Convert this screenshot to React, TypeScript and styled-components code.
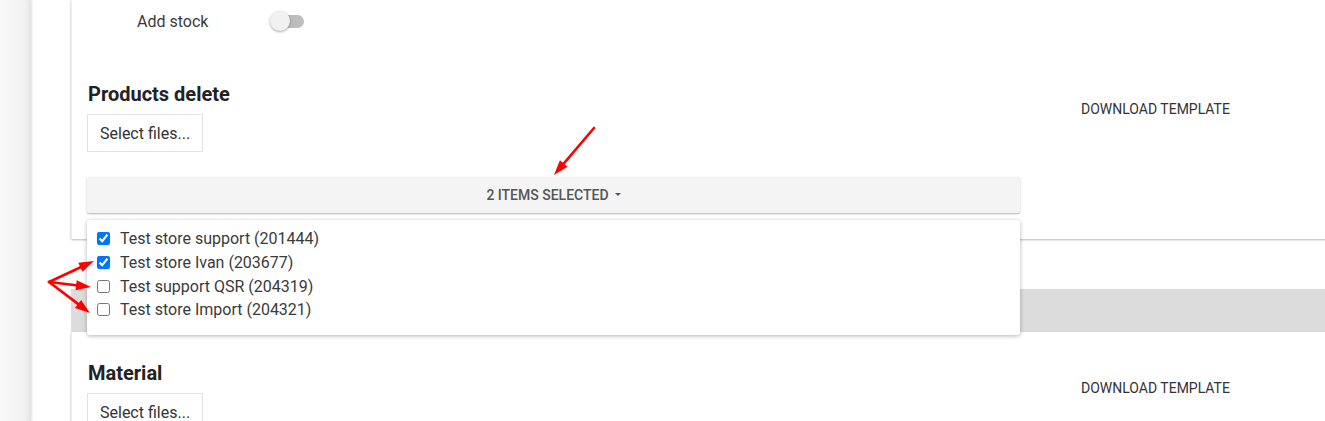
import React from "react";
import styled, { createGlobalStyle } from "styled-components";

const GlobalStyle = createGlobalStyle`
    html, body {
        margin: 0;
        padding: 0;
        background: #ffffff;
        overflow: hidden;
    }
    body {
        font-family: Roboto, "Liberation Sans", Arial, sans-serif;
        color: #333333;
    }
`;

const Page = styled.div`
    position: relative;
    display: flex;
    width: 1325px;
    height: 421px;
    overflow: hidden;
`;
const SideStrip = styled.div`
    flex: 0 0 31px;
    background: linear-gradient(to right, #f9f9f9 0%, #f1f1f1 80%, #e4e4e4 100%);
    box-shadow: 1px 0 2px rgba(0, 0, 0, 0.12);
    z-index: 1;
`;
const Main = styled.div`
    flex: 1;
    min-width: 0;
    padding-left: 40px;
    display: flex;
    flex-direction: column;
`;
const Card = styled.div<{ $top?: number }>`
    margin-right: -20px;
    background: #ffffff;
    border-left: 1px solid #ececec;
    box-shadow: 0 1px 2px rgba(0, 0, 0, 0.28);
    padding: ${(p) => p.$top ?? 0}px 0 26px 15px;
`;
const ToggleRow = styled.div`
    display: flex;
    align-items: center;
    height: 42px;
    padding-left: 50px;
`;
const ToggleLabel = styled.div`
    width: 133px;
    font-size: 16px;
    color: #3a3a3a;
`;
const Toggle = styled.div`
    position: relative;
    width: 34px;
    height: 20px;
    display: flex;
    align-items: center;
`;
const ToggleTrack = styled.div`
    margin-left: 8px;
    width: 26px;
    height: 13px;
    border-radius: 7px;
    background: #bdbdbd;
`;
const ToggleThumb = styled.div`
    position: absolute;
    left: 0;
    top: 0;
    width: 20px;
    height: 20px;
    border-radius: 50%;
    background: #f1f1f1;
    box-shadow: 0 1px 3px rgba(0, 0, 0, 0.35);
`;
const Section = styled.div<{ $gap: number }>`
    display: flex;
    margin-top: ${(p) => p.$gap}px;
`;
const LeftCol = styled.div`
    width: 933px;
    display: flex;
    flex-direction: column;
    align-items: flex-start;
`;
const RightCol = styled.div`
    flex: 1;
    padding-left: 61px;
`;
const Heading = styled.h2`
    margin: 0 0 8px 1px;
    font-size: 20px;
    line-height: 24px;
    font-weight: 700;
    color: #222222;
`;
const FileButton = styled.button`
    height: 38px;
    padding: 0 12px;
    border: 1px solid #e3e3e3;
    background: #ffffff;
    font-family: inherit;
    font-size: 16px;
    color: #333333;
`;
const TextButton = styled.button`
    margin-top: 9px;
    height: 36px;
    padding: 0;
    border: none;
    background: transparent;
    font-family: inherit;
    font-size: 14px;
    text-transform: uppercase;
    color: #333333;
`;
const Dropdown = styled.div`
    position: relative;
    align-self: stretch;
    margin-top: 25px;
`;
const DropdownButton = styled.button`
    width: 100%;
    height: 36px;
    border: none;
    border-radius: 2px;
    background: #f4f4f4;
    box-shadow: 0 1px 2px rgba(0, 0, 0, 0.3);
    font-family: inherit;
    font-size: 14px;
    font-weight: 500;
    text-transform: uppercase;
    color: #555555;
    display: flex;
    align-items: center;
    justify-content: center;
    gap: 6px;
`;
const Caret = styled.span`
    width: 0;
    height: 0;
    border-left: 3px solid transparent;
    border-right: 3px solid transparent;
    border-top: 3px solid #555555;
    margin-top: -2px;
`;
const Menu = styled.ul`
    position: absolute;
    top: 43px;
    left: 0;
    right: 0;
    z-index: 5;
    margin: 0;
    padding: 7px 0 13px;
    list-style: none;
    background: #ffffff;
    border-radius: 3px;
    box-shadow: 0 1px 4px rgba(0, 0, 0, 0.3);
`;
const MenuItem = styled.li`
    display: flex;
    align-items: center;
    height: 23.7px;
    padding-left: 10px;
    font-size: 16px;
    color: #3a3a3a;
`;
const Check = styled.input`
    width: 13px;
    height: 13px;
    margin: 0 10px 0 0;
    accent-color: #0075ff;
`;
const Spacer = styled.div`
    height: 50px;
    flex: 0 0 50px;
`;
const GrayBar = styled.div`
    flex: 0 0 43px;
    margin-right: -20px;
    background: #dcdcdc;
`;
const Arrows = styled.svg`
    position: absolute;
    left: 0;
    top: 0;
    z-index: 20;
    pointer-events: none;
`;

const stores = [
    { name: "Test store support (201444)", checked: true },
    { name: "Test store Ivan (203677)", checked: true },
    { name: "Test support QSR (204319)", checked: false },
    { name: "Test store Import (204321)", checked: false },
];

const Arrow = ({ x1, y1, x2, y2 }: { x1: number; y1: number; x2: number; y2: number }) => {
    const a = Math.atan2(y2 - y1, x2 - x1);
    const len = 15;
    const w = 5;
    const bx = x2 - len * Math.cos(a);
    const by = y2 - len * Math.sin(a);
    const px = -Math.sin(a) * w;
    const py = Math.cos(a) * w;
    return (
        <g>
            <line x1={x1} y1={y1} x2={bx + 2 * Math.cos(a)} y2={by + 2 * Math.sin(a)} stroke="#ff0000" strokeWidth={2.6} strokeLinecap="round" />
            <polygon points={`${x2},${y2} ${bx + px},${by + py} ${bx - px},${by - py}`} fill="#ff0000" />
        </g>
    );
};

const App = () => {
    return (
        <>
            <GlobalStyle />
            <Page>
                <SideStrip />
                <Main>
                    <Card>
                        <ToggleRow>
                            <ToggleLabel>Add stock</ToggleLabel>
                            <Toggle>
                                <ToggleTrack />
                                <ToggleThumb />
                            </Toggle>
                        </ToggleRow>
                        <Section $gap={40}>
                            <LeftCol>
                                <Heading>Products delete</Heading>
                                <FileButton>Select files...</FileButton>
                                <Dropdown>
                                    <DropdownButton>
                                        2 items selected <Caret />
                                    </DropdownButton>
                                    <Menu>
                                        {stores.map((s) => (
                                            <MenuItem key={s.name}>
                                                <Check type="checkbox" checked={s.checked} readOnly />
                                                {s.name}
                                            </MenuItem>
                                        ))}
                                    </Menu>
                                </Dropdown>
                            </LeftCol>
                            <RightCol>
                                <TextButton>Download template</TextButton>
                            </RightCol>
                        </Section>
                    </Card>
                    <Spacer />
                    <GrayBar />
                    <Card $top={29}>
                        <Section $gap={0}>
                            <LeftCol>
                                <Heading>Material</Heading>
                                <FileButton>Select files...</FileButton>
                            </LeftCol>
                            <RightCol>
                                <TextButton>Download template</TextButton>
                            </RightCol>
                        </Section>
                    </Card>
                </Main>
                <Arrows width={1325} height={421}>
                    <Arrow x1={594} y1={128} x2={554} y2={175} />
                    <Arrow x1={49} y1={282} x2={94} y2={261} />
                    <Arrow x1={49} y1={282} x2={91} y2={287} />
                    <Arrow x1={49} y1={282} x2={90} y2={313} />
                </Arrows>
            </Page>
        </>
    );
};

export default App;
